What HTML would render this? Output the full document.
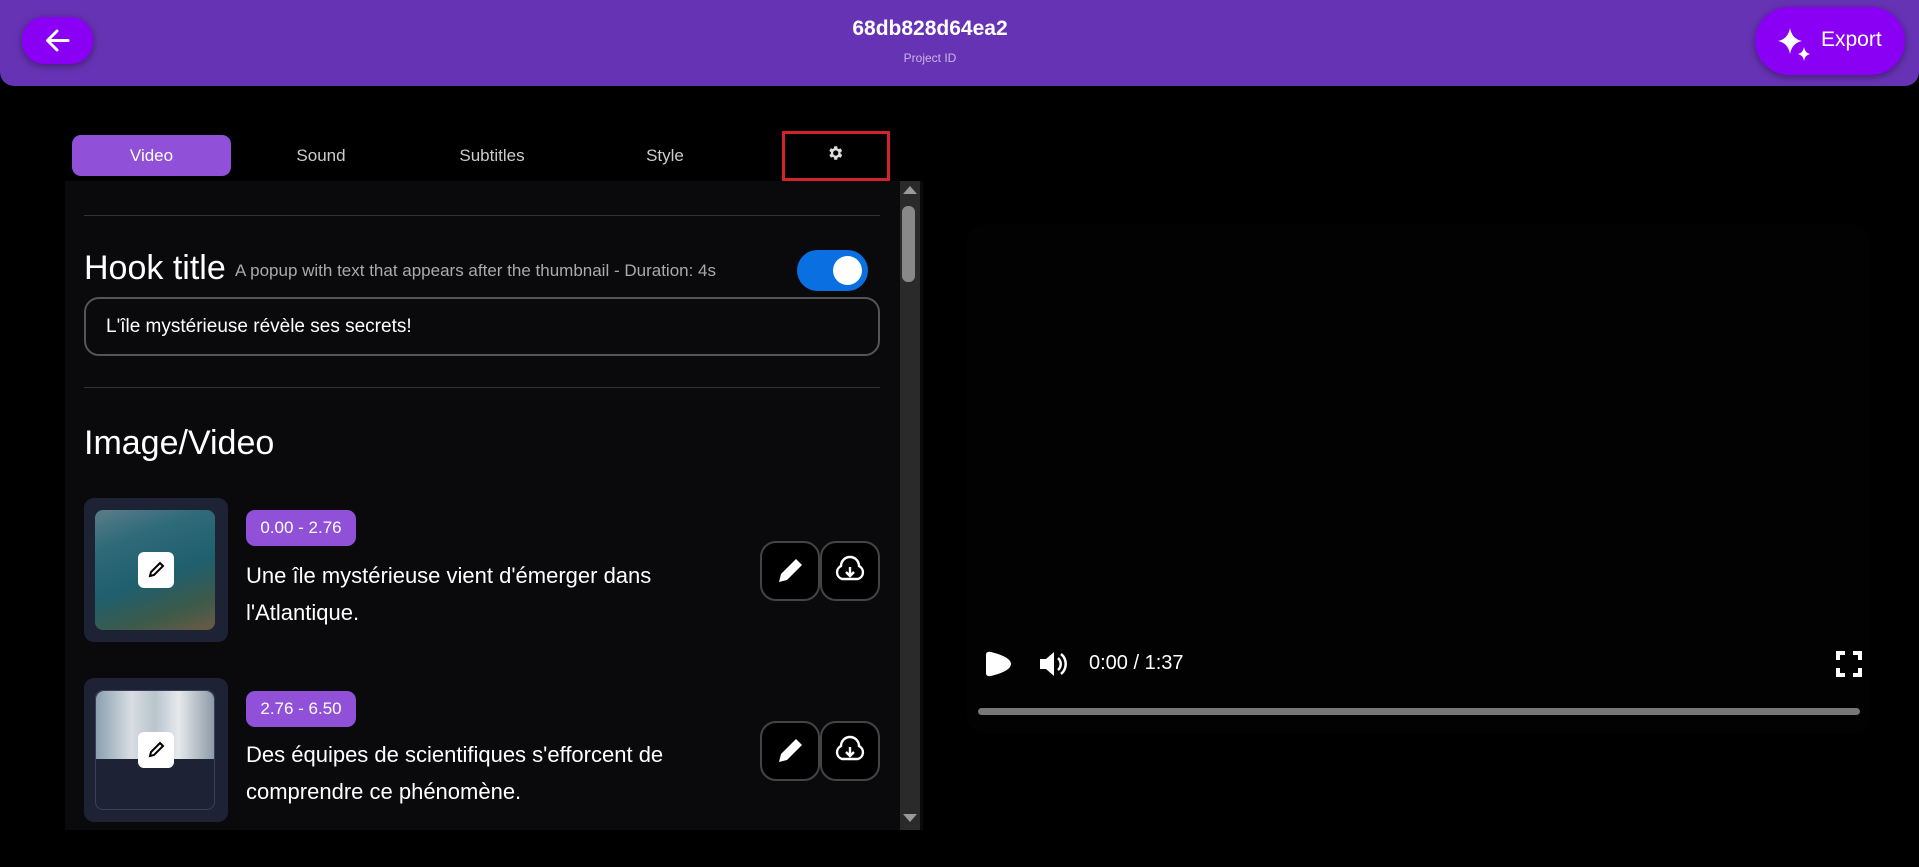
<!DOCTYPE html>
<html><head><meta charset="utf-8"><style>
*{box-sizing:border-box;margin:0;padding:0}
body{width:1919px;height:867px;background:#000;font-family:"Liberation Sans",sans-serif;color:#fff;position:relative;overflow:hidden}
.abs{position:absolute}
.hdr{left:0;top:0;width:1919px;height:86px;background:#6733b5;border-radius:0 0 14px 14px}
.back{left:22px;top:17px;width:71px;height:47px;background:#8a00f5;border-radius:22px;box-shadow:0 2px 8px rgba(0,0,0,.4)}
.export{left:1755px;top:7px;width:150px;height:68px;background:#8a00f5;border-radius:34px;box-shadow:0 2px 8px rgba(0,0,0,.4)}
.panel{left:65px;top:127px;width:858px;height:703px;background:#0a0a0d}
.tabbar{left:65px;top:127px;width:858px;height:54px;background:#000}
.tab{top:135px;height:41px;line-height:41px;text-align:center;font-size:17px;color:#ccc}
.line{left:84px;width:796px;height:1px;background:#333}
.badge{left:246px;width:110px;height:36px;background:#9050d8;border-radius:9px;font-size:17px;line-height:36px;text-align:center}
.txt{left:246px;font-size:22px;line-height:37px;width:500px}
.btn{width:60px;height:60px;border:2px solid #444;border-radius:16px;background:#000}
.thumb{left:84px;width:144px;height:144px;background:#1e2235;border-radius:10px}
</style></head><body>
<div class="abs hdr"></div>
<div class="abs back"><svg width="71" height="47" viewBox="0 0 71 47"><path d="M46 23.5H26M35 14l-9.5 9.5L35 33" stroke="#fff" stroke-width="3" fill="none" stroke-linecap="round" stroke-linejoin="round"/></svg></div>
<div class="abs" style="left:780px;top:17px;width:300px;text-align:center;font-size:21px;font-weight:bold">68db828d64ea2</div>
<div class="abs" style="left:780px;top:51px;width:300px;text-align:center;font-size:12px;color:#c9b6e6">Project ID</div>
<div class="abs export"><svg class="abs" style="left:20px;top:18px" width="40" height="40" viewBox="0 0 40 40"><path d="M15 3Q17 14 27 16Q17 18 15 29Q13 18 3 16Q13 14 15 3Z" fill="#fff"/><path d="M29 22Q30 28 35 29Q30 30 29 36Q28 30 23 29Q28 28 29 22Z" fill="#fff"/></svg><span class="abs" style="left:66px;top:21px;font-size:21px">Export</span></div>

<div class="abs panel"></div>
<div class="abs tabbar"></div>
<div class="abs tab" style="left:72px;width:159px;background:#9050d8;border-radius:9px;color:#fff">Video</div>
<div class="abs tab" style="left:261px;width:120px">Sound</div>
<div class="abs tab" style="left:432px;width:120px">Subtitles</div>
<div class="abs tab" style="left:605px;width:120px">Style</div>
<div class="abs" style="left:782px;top:131px;width:108px;height:50px;border:3px solid #d4222a"></div>
<svg class="abs" style="left:826px;top:144px" width="18" height="18" viewBox="0 0 24 24"><path fill="#ddd" d="M19.4 13a7.5 7.5 0 000-2l2.1-1.6-2-3.5-2.5 1a7 7 0 00-1.7-1L15 3h-4l-.4 2.7a7 7 0 00-1.7 1l-2.5-1-2 3.5L6.6 11a7.5 7.5 0 000 2l-2.1 1.6 2 3.5 2.5-1a7 7 0 001.7 1L11 21h4l.4-2.7a7 7 0 001.7-1l2.5 1 2-3.5zM13 15.5a3.5 3.5 0 110-7 3.5 3.5 0 010 7z"/></svg>
<div class="abs" style="left:900px;top:181px;width:20px;height:649px;background:#2a2a2a"></div>
<div class="abs" style="left:902px;top:206px;width:13px;height:76px;background:#888;border-radius:6px"></div>
<svg class="abs" style="left:902px;top:185px" width="16" height="10"><path d="M8 1L15 9H1Z" fill="#999"/></svg>
<svg class="abs" style="left:902px;top:813px" width="16" height="10"><path d="M8 9L15 1H1Z" fill="#999"/></svg>

<div class="abs line" style="top:215px"></div>
<div class="abs" style="left:84px;top:249px;font-size:34px">Hook title</div>
<div class="abs" style="left:235px;top:261px;font-size:17px;color:#aaa">A popup with text that appears after the thumbnail - Duration: 4s</div>
<div class="abs" style="left:797px;top:250px;width:71px;height:41px;background:#0a6fe0;border-radius:21px"><div class="abs" style="left:36px;top:6px;width:29px;height:29px;background:#fff;border-radius:50%"></div></div>
<div class="abs" style="left:84px;top:297px;width:796px;height:59px;border:2px solid #555;border-radius:15px;font-size:19px;line-height:55px;padding-left:20px">L'île mystérieuse révèle ses secrets!</div>
<div class="abs line" style="top:387px"></div>
<div class="abs" style="left:84px;top:424px;font-size:34px">Image/Video</div>

<div class="abs thumb" style="top:498px"></div>
<div class="abs" style="left:95px;top:510px;width:120px;height:120px;border-radius:8px;background:linear-gradient(160deg,#5a7d8a 0%,#2f6a78 25%,#1f5f6e 55%,#3d5a4a 80%,#6b5a44 100%)"></div>
<div class="abs" style="left:138px;top:552px;width:36px;height:36px;background:#fff;border-radius:6px"></div>
<svg class="abs" style="left:146px;top:560px" width="20" height="20" viewBox="0 0 20 20"><path d="M14 3l3 3-9 9-4 1 1-4z" fill="none" stroke="#000" stroke-width="2"/></svg>
<div class="abs badge" style="top:510px">0.00 - 2.76</div>
<div class="abs txt" style="top:557px">Une île mystérieuse vient d'émerger dans l'Atlantique.</div>
<div class="abs btn" style="left:760px;top:541px"></div>
<div class="abs btn" style="left:820px;top:541px"></div>

<div class="abs thumb" style="top:678px"></div>
<div class="abs" style="left:95px;top:690px;width:120px;height:120px;border-radius:8px;border:1px solid #3a3f5a;background:#1e2235"></div>
<div class="abs" style="left:96px;top:691px;width:118px;height:68px;border-radius:8px 8px 0 0;background:linear-gradient(90deg,#8aa0b0,#d8dde2 30%,#b8c4cc 50%,#e6e9ec 70%,#8d9aa6)"></div>
<div class="abs" style="left:138px;top:732px;width:36px;height:36px;background:#fff;border-radius:6px"></div>
<svg class="abs" style="left:146px;top:740px" width="20" height="20" viewBox="0 0 20 20"><path d="M14 3l3 3-9 9-4 1 1-4z" fill="none" stroke="#000" stroke-width="2"/></svg>
<div class="abs badge" style="top:691px">2.76 - 6.50</div>
<div class="abs txt" style="top:736px">Des équipes de scientifiques s'efforcent de comprendre ce phénomène.</div>
<div class="abs btn" style="left:760px;top:721px"></div>
<div class="abs btn" style="left:820px;top:721px"></div>

<svg class="abs" style="left:760px;top:541px" width="60" height="60" viewBox="0 0 60 60"><path d="M36 18l6 6-15 15-8 2 2-8z" fill="#fff"/></svg>
<svg class="abs" style="left:820px;top:541px" width="60" height="60" viewBox="0 0 60 60"><path d="M22 38a7 7 0 01-1-13 9 9 0 0118 0 7 7 0 01-1 13z" fill="none" stroke="#fff" stroke-width="2.4"/><path d="M30 26v9M26 31l4 4 4-4" stroke="#fff" stroke-width="2.4" fill="none"/></svg>
<svg class="abs" style="left:760px;top:721px" width="60" height="60" viewBox="0 0 60 60"><path d="M36 18l6 6-15 15-8 2 2-8z" fill="#fff"/></svg>
<svg class="abs" style="left:820px;top:721px" width="60" height="60" viewBox="0 0 60 60"><path d="M22 38a7 7 0 01-1-13 9 9 0 0118 0 7 7 0 01-1 13z" fill="none" stroke="#fff" stroke-width="2.4"/><path d="M30 26v9M26 31l4 4 4-4" stroke="#fff" stroke-width="2.4" fill="none"/></svg>

<div class="abs" style="left:967px;top:224px;width:903px;height:510px;background:#020202;border-radius:18px"></div>
<svg class="abs" style="left:983px;top:649px" width="30" height="30" viewBox="0 0 30 30"><path d="M3 6Q3 2 8 3Q28 8 28 15Q28 22 8 27Q3 28 3 24Z" fill="#fff"/></svg>
<svg class="abs" style="left:1037px;top:649px" width="32" height="30" viewBox="0 0 32 30"><path d="M3 10h6l8-7v24l-8-7H3z" fill="#fff"/><path d="M21 9a8 8 0 010 12M24 5a13 13 0 010 20" stroke="#fff" stroke-width="2.5" fill="none"/></svg>
<div class="abs" style="left:1089px;top:652px;font-size:20px">0:00 / 1:37</div>
<svg class="abs" style="left:1836px;top:651px" width="26" height="26" viewBox="0 0 26 26"><path d="M2 9V2h7M17 2h7v7M24 17v7h-7M9 24H2v-7" stroke="#fff" stroke-width="4" fill="none"/></svg>
<div class="abs" style="left:978px;top:708px;width:882px;height:7px;background:#777;border-radius:4px"></div>
</body></html>
